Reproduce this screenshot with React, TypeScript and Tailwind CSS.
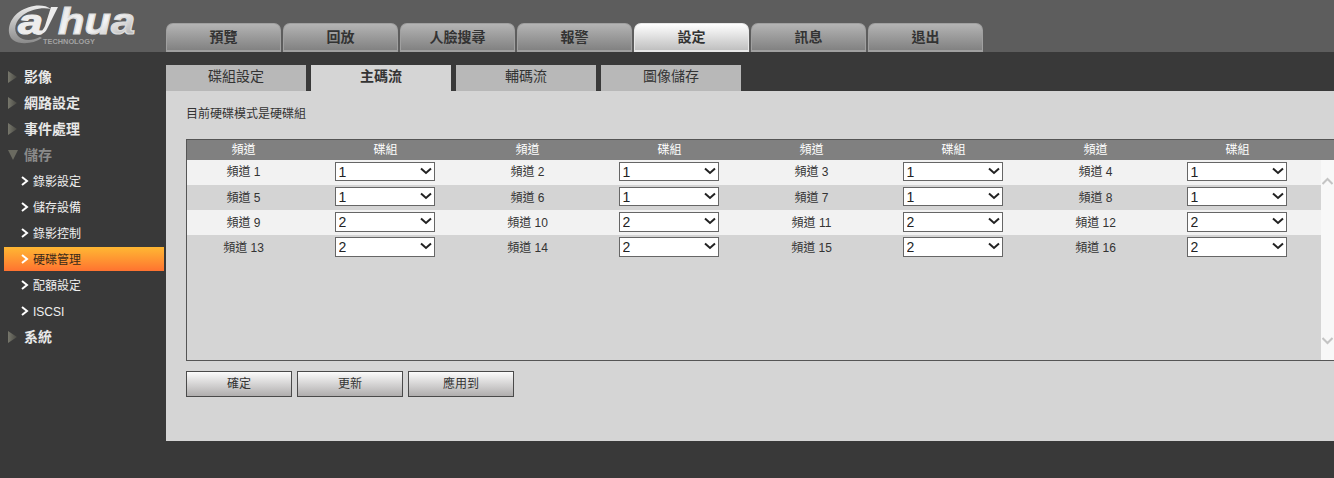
import React from "react";

const font = "font-['Liberation_Sans','Noto_Sans_CJK_TC',sans-serif]";
const nav = ["預覽", "回放", "人臉搜尋", "報警", "設定", "訊息", "退出"];
const sub = ["碟組設定", "主碼流", "輔碼流", "圖像儲存"];
const rows = [
  { ch: [1, 2, 3, 4], v: "1", h: "h-[19px]", bg: "bg-[#f2f2f2]" },
  { ch: [5, 6, 7, 8], v: "1", h: "h-[19px]", bg: "bg-[#d4d4d4]" },
  { ch: [9, 10, 11, 12], v: "2", h: "h-[20px]", bg: "bg-[#f2f2f2]" },
  { ch: [13, 14, 15, 16], v: "2", h: "h-[20px]", bg: "bg-[#d4d4d4]" },
];

function Logo() {
  return (
    <svg width="140" height="46" viewBox="0 0 140 46" className="block">
      <defs>
        <linearGradient id="lg" x1="0" y1="0" x2="1" y2="1">
          <stop offset="0" stopColor="#e8e8e8" />
          <stop offset="0.55" stopColor="#f4f4f4" />
          <stop offset="1" stopColor="#a0a0a0" />
        </linearGradient>
        <linearGradient id="ring" x1="0" y1="0" x2="0" y2="1">
          <stop offset="0" stopColor="#ececec" />
          <stop offset="1" stopColor="#8a8a8a" />
        </linearGradient>
      </defs>
      <path d="M51 7C43 1 29 3 19 10C8 18 6 32 13 38C20 43 33 42 42 36L40 35C32 39 23 39 18 34C13 28 15 19 23 13C31 7 43 5 51 7Z" fill="url(#ring)" />
      <text x="18" y="32" fontFamily="Liberation Sans" fontWeight="700" fontStyle="italic" fontSize="35" fill="#ededed" stroke="#ededed" strokeWidth="1" textLength="25" lengthAdjust="spacingAndGlyphs">a</text>
      <path d="M51 5H58L47 27C45 31 41 33 36 33C41 31 43 28 45 24Z" fill="#ececec" />
      <text x="58" y="32" fontFamily="Liberation Sans" fontWeight="700" fontStyle="italic" fontSize="37" fill="url(#lg)" stroke="#dcdcdc" strokeWidth="1.2" textLength="77" lengthAdjust="spacingAndGlyphs">hua</text>
      <text x="43" y="42" fontFamily="Liberation Sans" fontWeight="700" fontSize="6.5" fill="#a2a2a2" textLength="52" lengthAdjust="spacingAndGlyphs">TECHNOLOGY</text>
    </svg>
  );
}

function Tri({ open }: { open?: boolean }) {
  return (
    <svg width="10" height="12" viewBox="0 0 10 12" className="shrink-0">
      <defs>
        <linearGradient id="tg" x1="0" y1="0" x2="1" y2="0">
          <stop offset="0" stopColor="#77776c" />
          <stop offset="1" stopColor="#4a4a44" />
        </linearGradient>
      </defs>
      {open ? <path d="M0 1H10L5 11Z" fill="#6a6a60" /> : <path d="M0 0L9 6L0 12Z" fill="url(#tg)" />}
    </svg>
  );
}

function Top({ label, dim }: { label: string; dim?: boolean }) {
  return (
    <div className={`h-[26px] flex items-center pl-[8px] gap-[6px] text-[14px] font-bold ${dim ? "text-[#8a8a8a]" : "text-[#e8e8e8]"}`}>
      <Tri open={dim} />
      <span>{label}</span>
    </div>
  );
}

function Sub({ label, active }: { label: string; active?: boolean }) {
  return (
    <div className="h-[26px] flex items-center">
      <div className={`ml-[4px] w-[160px] h-[24px] flex items-center pl-[17px] gap-[4px] text-[12px] ${active ? "bg-gradient-to-b from-[#ffb733] to-[#ff7230] text-[#3a2a1a]" : "text-[#f0f0f0]"}`}>
        <svg width="8" height="10" viewBox="0 0 8 10" className="shrink-0">
          <path d="M1 1L6 5L1 9" fill="none" stroke="#ffffff" strokeWidth="2" />
        </svg>
        <span className="relative top-px">{label}</span>
      </div>
    </div>
  );
}

function Btn({ label }: { label: string }) {
  return (
    <button className="w-[106px] h-[26px] border border-[#4a4a4a] bg-gradient-to-b from-[#fcfcfc] to-[#b0aeae] text-[12px] text-[#333]">
      {label}
    </button>
  );
}

export default function App() {
  return (
    <div className={`w-[1334px] h-[478px] overflow-hidden bg-[#393939] flex flex-col ${font}`}>
      <header className="h-[52px] bg-[#5d5d5d] flex shrink-0">
        <div className="w-[166px] pt-[2px] shrink-0"><Logo /></div>
        <nav className="flex gap-[2px] items-end">
          {nav.map((n) => (
            <div
              key={n}
              className={`w-[115px] h-[29px] rounded-t-[7px] border border-b-2 flex items-center justify-center text-[14px] font-bold text-[#333] ${
                n === "設定"
                  ? "bg-gradient-to-b from-[#ffffff] to-[#c0c0c0] border-[#e8e8e8]"
                  : "bg-gradient-to-b from-[#b4b4b4] to-[#828282] border-[#a0a0a0]"
              }`}
            >
              {n}
            </div>
          ))}
        </nav>
      </header>
      <div className="flex flex-1 min-h-0">
        <aside className="w-[166px] shrink-0 pt-[12px]">
          <Top label="影像" />
          <Top label="網路設定" />
          <Top label="事件處理" />
          <Top label="儲存" dim />
          <Sub label="錄影設定" />
          <Sub label="儲存設備" />
          <Sub label="錄影控制" />
          <Sub label="硬碟管理" active />
          <Sub label="配額設定" />
          <Sub label="ISCSI" />
          <Top label="系統" />
        </aside>
        <main className="flex-1 min-w-0 pt-[13px]">
          <div className="flex gap-[5px] h-[26px]">
            {sub.map((s) => (
              <div
                key={s}
                className={`w-[140px] flex items-center justify-center pb-[3px] text-[14px] text-[#333] ${s === "主碼流" ? "bg-[#d5d5d5] font-bold" : "bg-[#b8b8b8]"}`}
              >
                {s}
              </div>
            ))}
          </div>
          <div className="h-[350px] bg-[#d5d5d5] pl-[20px] pt-[15px]">
            <p className="text-[12px] leading-[16px] text-[#333]">目前硬碟模式是硬碟組</p>
            <div className="mt-[17px] h-[222px] border border-r-0 border-[#555] flex flex-col">
              <div className="h-[20px] bg-[#808080] grid grid-cols-[113px_171px_113px_171px_113px_171px_113px_171px] text-[12px] text-white shrink-0">
                {[0, 1, 2, 3].map((i) => (
                  <React.Fragment key={i}>
                    <div className="text-center leading-[20px]">頻道</div>
                    <div className="text-center leading-[20px]">碟組</div>
                  </React.Fragment>
                ))}
              </div>
              <div className="flex flex-1 min-h-0">
                <div className="flex-1 min-w-0 overflow-hidden">
                  {rows.map((r) => (
                    <div key={r.ch[0]} className={`h-[25px] ${r.bg} grid grid-cols-[113px_171px_113px_171px_113px_171px_113px_171px]`}>
                      {r.ch.map((c) => (
                        <React.Fragment key={c}>
                          <div className={`text-center text-[12px] text-[#333] ${c <= 4 ? "leading-[25px]" : "leading-[27px]"}`}>頻道 {c}</div>
                          <div className="flex justify-center pt-[2px] pr-[2px]">
                            <div className="relative w-[100px]">
                              <select
                                defaultValue={r.v}
                                className={`block w-full ${r.h} appearance-none bg-white border border-[#666] pl-[3px] text-[14px] leading-[14px] text-[#222]`}
                              >
                                <option value="1">1</option>
                                <option value="2">2</option>
                              </select>
                              <svg width="12" height="8" viewBox="0 0 12 8" className="absolute right-[3px] top-[5px] pointer-events-none">
                                <path d="M1 1.5L6 6L11 1.5" fill="none" stroke="#222" strokeWidth="2" />
                              </svg>
                            </div>
                          </div>
                        </React.Fragment>
                      ))}
                    </div>
                  ))}
                </div>
                <div className="w-[13px] shrink-0 bg-[#f8f8f8] flex flex-col items-center justify-between pt-[17px] pb-[15px]">
                  <svg width="11" height="8" viewBox="0 0 11 8">
                    <path d="M0.5 7L5.5 2L10.5 7" fill="none" stroke="#c4c4c4" strokeWidth="2" />
                  </svg>
                  <svg width="11" height="8" viewBox="0 0 11 8">
                    <path d="M0.5 1L5.5 6L10.5 1" fill="none" stroke="#c4c4c4" strokeWidth="2" />
                  </svg>
                </div>
              </div>
            </div>
            <div className="flex gap-[5px] mt-[10px]">
              <Btn label="確定" />
              <Btn label="更新" />
              <Btn label="應用到" />
            </div>
          </div>
        </main>
      </div>
    </div>
  );
}
